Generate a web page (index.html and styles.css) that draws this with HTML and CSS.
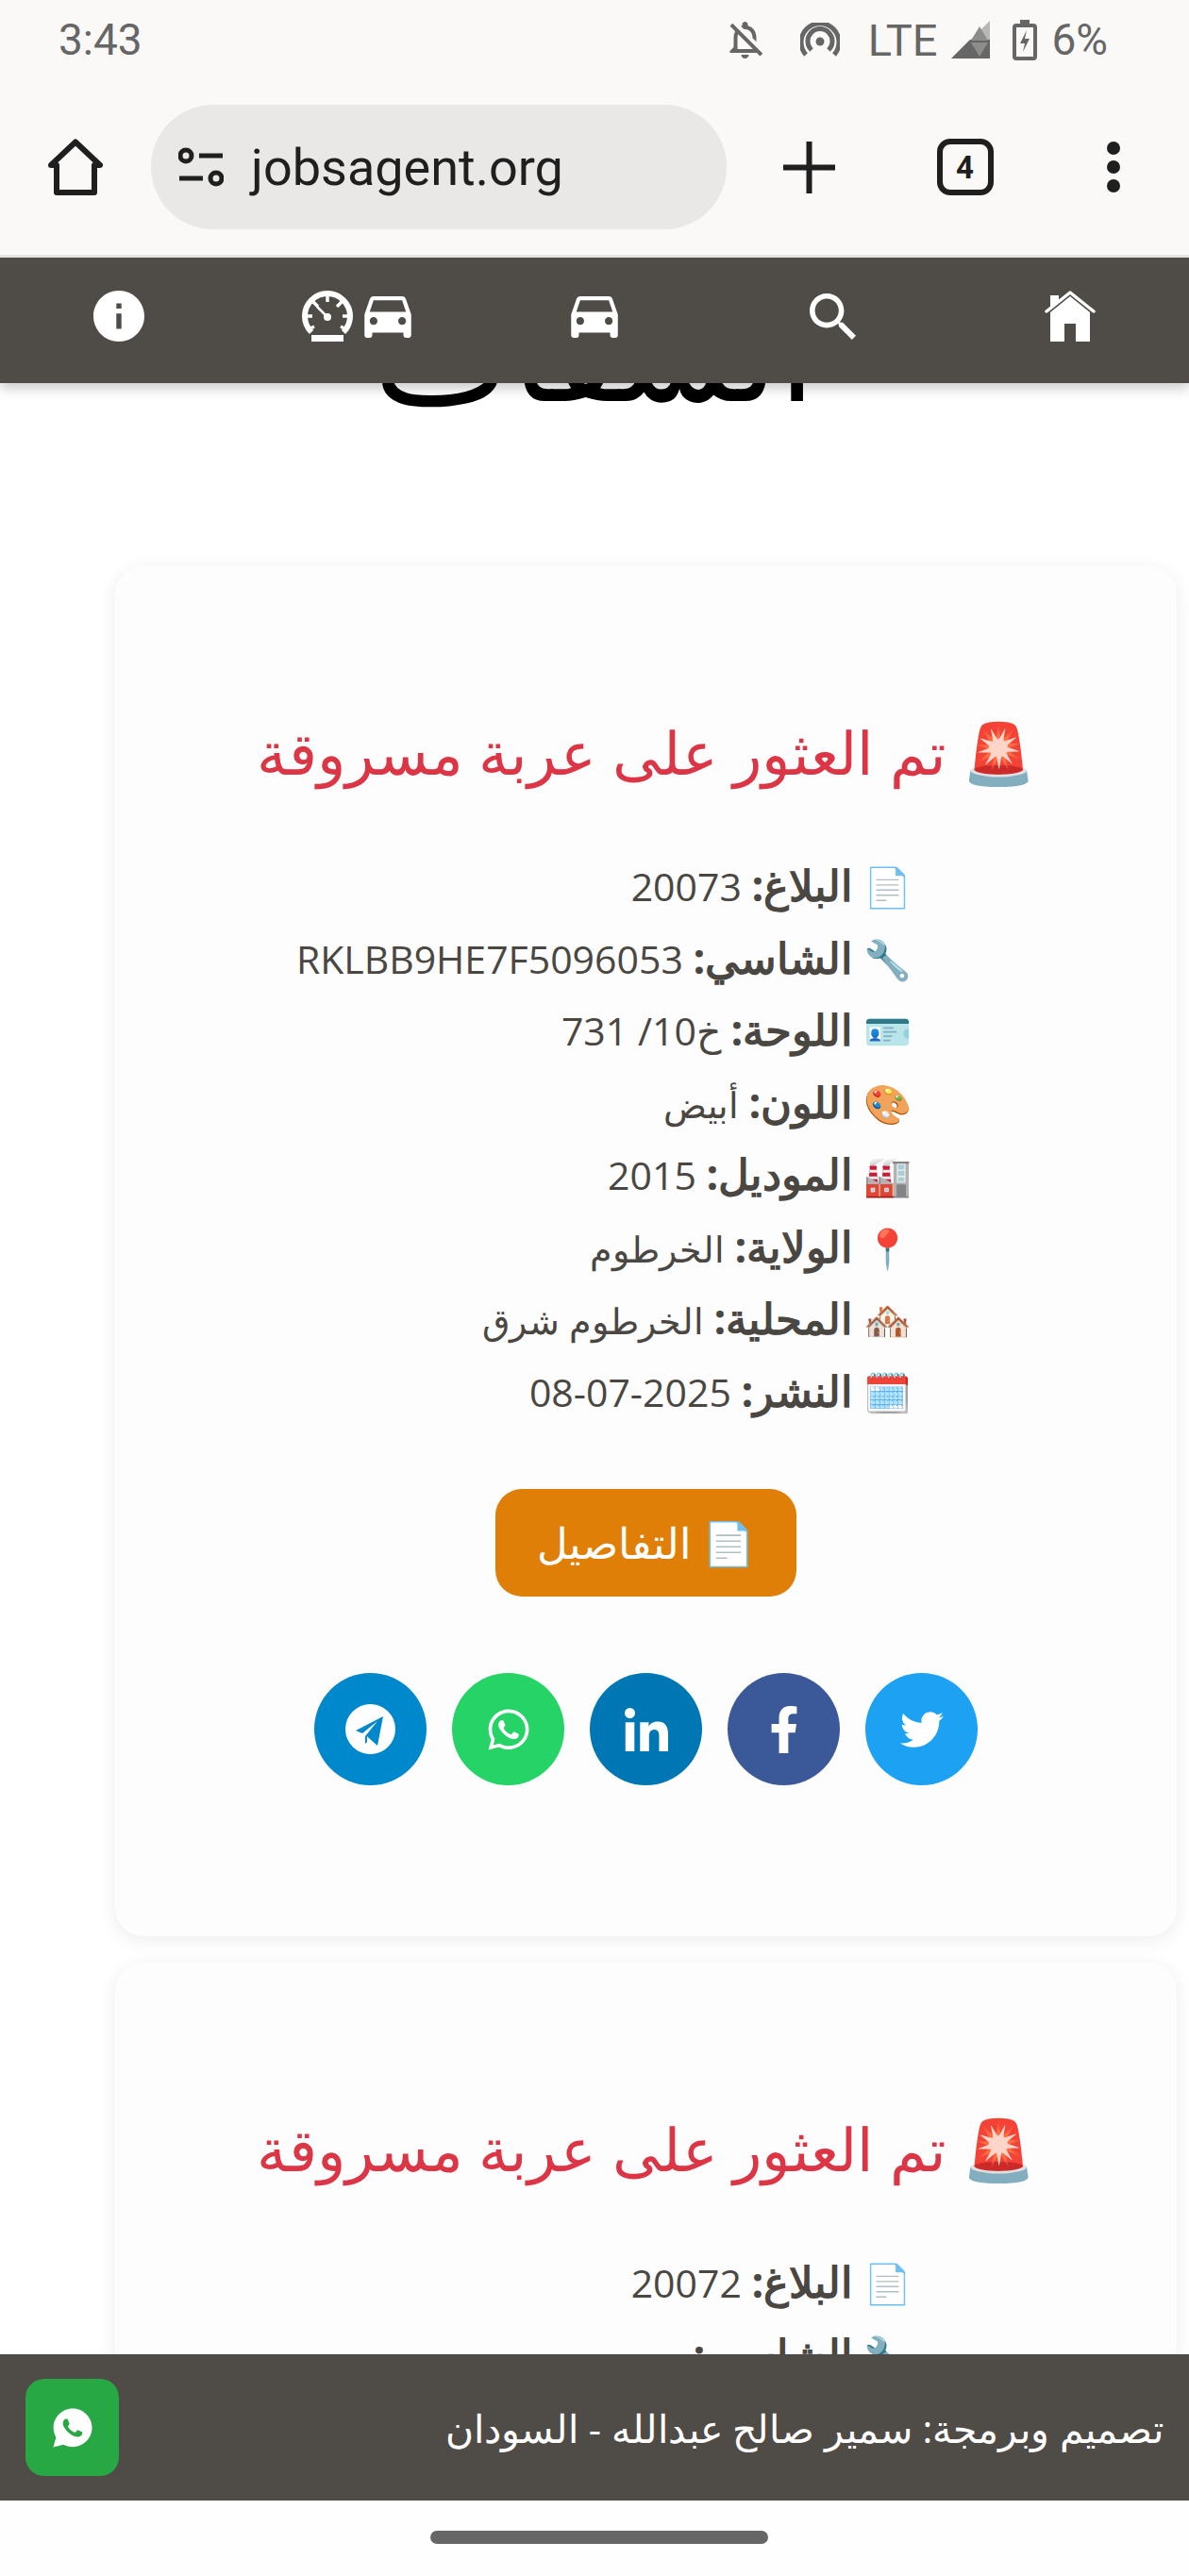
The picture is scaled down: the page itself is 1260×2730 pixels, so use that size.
FILE: index.html
```html
<!DOCTYPE html>
<html lang="ar" dir="rtl">

<head>
    <meta charset="UTF-8">
    <meta name="viewport" content="width=device-width, initial-scale=1.0">
    <title>jobsagent.org</title>
    <link rel="stylesheet" href="styles.css">
</head>

<body>
    <header class="browser" dir="ltr">
        <div class="status-bar">
            <span class="clock">3:43</span>
            <div class="status-icons">
                <svg class="ic-bell" viewBox="3 1.5 19.5 21"><path d="M12 22c1.1 0 2-.9 2-2h-4c0 1.1.9 2 2 2zM12 6.500c2.490 0 4 2.020 4 4.500v.1l2 2V11c0-3.070-1.630-5.640-4.500-6.320V4c0-.83-.67-1.500-1.500-1.500s-1.500.67-1.500 1.500v.68c-.24.06-.47.15-.69.23l1.640 1.640c.18-.02.36-.05.55-.05zM5.410 3.350L4 4.760l2.810 2.810C6.290 8.570 6 9.740 6 11v5l-2 2v1h14.240l1.740 1.740 1.410-1.410L5.410 3.350zM16 17H8v-6c0-.68.12-1.320.34-1.900L16 16.760V17z"/></svg>
                <svg class="ic-hotspot" viewBox="0 0 42 36"><circle cx="21" cy="20" r="4.500"/><path class="arc" d="M12 29a13 13 0 1 1 18 0M6 34a20 20 0 1 1 30 0"/></svg>
                <span class="lte">LTE</span>
                <svg class="ic-signal" viewBox="0 0 41 40"><path class="sig-back" d="M41 0V40H0z"/><path d="M0 40L20 20h21v20z"/><path class="sig-up" d="M30 6l9 15H21z"/><path class="sig-down" d="M21 23h18l-9 15z"/></svg>
                <svg class="ic-battery" viewBox="0 0 26 43"><path d="M8 0h10v4h4a4 4 0 0 1 4 4v31a4 4 0 0 1-4 4H4a4 4 0 0 1-4-4V8a4 4 0 0 1 4-4h4zM4 8v31h18V8z" fill-rule="evenodd"/><path d="M15 11l-7 14h5l-2 9 7-14h-5z"/></svg>
                <span class="percent">6%</span>
            </div>
        </div>
        <div class="toolbar">
            <svg class="ic-home-outline" viewBox="0 0 60 60"><path d="M30 3.500L56 28H50V57H10V28H4z"/></svg>
            <div class="url-pill">
                <svg class="ic-tune" viewBox="0 0 48 42"><circle cx="8" cy="9" r="6"/><path d="M22 9H47M1 33H26"/><circle cx="40" cy="33" r="6"/></svg>
                <span class="url">jobsagent.org</span>
            </div>
            <div class="tool-btn"><svg class="ic-plus" viewBox="0 0 55 55"><path d="M27.500 0V55M0 27.500H55"/></svg></div>
            <div class="tool-btn"><span class="tab-count">4</span></div>
            <div class="tool-btn tool-menu"><i></i><i></i><i></i></div>
        </div>
    </header>

    <div class="page">
        <nav class="site-nav">
            <a href="#">
                <svg class="ic-nav-home" viewBox="0 0 54 54"><path d="M6 5h9v8l-9 7zM27 6L48 23V54H33V35H21V54H6V23z"/><path class="roof" d="M2 22L27 2L52 22"/></svg>
            </a>
            <a href="#">
                <svg class="ic-search" viewBox="3 3 17.490 17.490"><path d="M15.500 14h-.79l-.28-.27C15.410 12.590 16 11.110 16 9.500 16 5.910 13.090 3 9.500 3S3 5.910 3 9.500 5.910 16 9.500 16c1.610 0 3.090-.59 4.230-1.570l.27.28v.79l5 4.990L20.490 19l-4.990-5zm-6 0C7.010 14 5 11.990 5 9.500S7.010 5 9.500 5 14 7.010 14 9.500 11.990 14 9.500 14z"/></svg>
            </a>
            <a href="#">
                <svg class="ic-car" viewBox="3 5 18 16"><path d="M18.920 6.010C18.720 5.420 18.160 5 17.500 5h-11c-.66 0-1.210.42-1.420 1.010L3 12v8c0 .55.45 1 1 1h1c.55 0 1-.45 1-1v-1h12v1c0 .55.45 1 1 1h1c.55 0 1-.45 1-1v-8l-2.080-5.990zM6.500 16c-.83 0-1.500-.67-1.500-1.500S5.670 13 6.500 13s1.500.67 1.500 1.500S7.330 16 6.500 16zm11 0c-.83 0-1.500-.67-1.500-1.500s.67-1.500 1.500-1.500 1.500.67 1.500 1.500-.67 1.500-1.500 1.500zM5 11l1.500-4.500h11L19 11H5z"/></svg>
            </a>
            <a href="#" class="nav-pair">
                <svg class="ic-car" viewBox="3 5 18 16"><path d="M18.920 6.010C18.720 5.420 18.160 5 17.500 5h-11c-.66 0-1.210.42-1.420 1.010L3 12v8c0 .55.45 1 1 1h1c.55 0 1-.45 1-1v-1h12v1c0 .55.45 1 1 1h1c.55 0 1-.45 1-1v-8l-2.080-5.990zM6.500 16c-.83 0-1.500-.67-1.500-1.500S5.670 13 6.500 13s1.500.67 1.500 1.500S7.330 16 6.500 16zm11 0c-.83 0-1.500-.67-1.500-1.500s.67-1.500 1.500-1.500 1.500.67 1.500 1.500-.67 1.500-1.500 1.500zM5 11l1.500-4.500h11L19 11H5z"/></svg>
                <svg class="ic-gauge" viewBox="0 0 54 54">
                    <path class="gauge-ring" d="M10 44A24 24 0 1 1 44 44"/>
                    <path class="gauge-ticks" d="M27 6V12M12 12l5 5M42 12l-5 5M5 27H11M43 27H49M7 41l6-3M47 41l-6-3"/>
                    <path class="gauge-needle" d="M16 17L27 28"/>
                    <circle cx="27" cy="28" r="4"/>
                    <rect x="10" y="47" width="34" height="7"/>
                </svg>
            </a>
            <a href="#">
                <svg class="ic-info" viewBox="2 2 20 20"><path d="M12 2C6.480 2 2 6.480 2 12s4.480 10 10 10 10-4.480 10-10S17.520 2 12 2zm1 15h-2v-6h2v6zm0-8h-2V7h2v2z"/></svg>
            </a>
        </nav>

        <main class="content">
            <h1 class="page-title">الشفاف</h1>

            <article class="card">
                <h2 class="card-title">🚨 تم العثور على عربة مسروقة</h2>
                <ul class="facts">
                    <li>📄 <b>البلاغ:</b> 20073</li>
                    <li>🔧 <b>الشاسي:</b> RKLBB9HE7F5096053</li>
                    <li>🪪 <b>اللوحة:</b> خ10/ 731</li>
                    <li>🎨 <b>اللون:</b> <span class="ar">أبيض</span></li>
                    <li>🏭 <b>الموديل:</b> 2015</li>
                    <li>📍 <b>الولاية:</b> <span class="ar">الخرطوم</span></li>
                    <li>🏘️ <b>المحلية:</b> <span class="ar">الخرطوم شرق</span></li>
                    <li>🗓️ <b>النشر:</b> 2025-07-08</li>
                </ul>
                <a href="#" class="details-btn">📄 التفاصيل</a>
                <div class="share">
                    <a href="#" class="twitter"><svg viewBox="0 0 512 512"><path d="M459.370 151.716c.325 4.548.325 9.097.325 13.645 0 138.720-105.583 298.558-298.558 298.558-59.452 0-114.680-17.219-161.137-47.106 8.447.974 16.568 1.299 25.340 1.299 49.055 0 94.213-16.568 130.274-44.832-46.132-.975-84.792-31.188-98.112-72.772 6.498.974 12.995 1.624 19.818 1.624 9.421 0 18.843-1.300 27.614-3.573-48.081-9.747-84.143-51.980-84.143-102.985v-1.299c13.969 7.797 30.214 12.670 47.431 13.319-28.264-18.843-46.781-51.005-46.781-87.391 0-19.492 5.197-37.360 14.294-52.954 51.655 63.675 129.300 105.258 216.365 109.807-1.624-7.797-2.599-15.918-2.599-24.040 0-57.828 46.782-104.934 104.934-104.934 30.213 0 57.502 12.670 76.670 33.137 23.715-4.548 46.456-13.320 66.599-25.340-7.798 24.366-24.366 44.833-46.132 57.827 21.117-2.273 41.584-8.122 60.426-16.243-14.292 20.791-32.161 39.308-52.628 54.253z"/></svg></a>
                    <a href="#" class="facebook"><svg class="ic-fb" viewBox="0 0 320 512"><path d="M279.140 288l14.220-92.660h-88.910v-60.130c0-25.350 12.420-50.060 52.240-50.060h40.420V6.260S260.430 0 225.360 0c-73.220 0-121.080 44.380-121.080 124.720v70.620H22.890V288h81.390v224h100.170V288z"/></svg></a>
                    <a href="#" class="linkedin"><svg viewBox="0 0 448 448"><path d="M100.280 448H7.400V148.900h92.880zM53.790 108.100C24.090 108.100 0 83.500 0 53.800a53.790 53.790 0 0 1 107.580 0c0 29.700-24.100 54.300-53.790 54.300zM447.900 448h-92.680V302.400c0-34.700-.7-79.200-48.290-79.200-48.290 0-55.690 37.700-55.690 76.700V448h-92.780V148.900h89.080v40.800h1.300c12.400-23.500 42.690-48.300 87.880-48.300 94 0 111.280 61.900 111.280 142.300V448z"/></svg></a>
                    <a href="#" class="whatsapp"><svg viewBox="0 16 448 480"><path d="M380.900 97.100C339 55.100 283.200 32 223.900 32c-122.400 0-222 99.600-222 222 0 39.100 10.200 77.300 29.600 111L0 480l117.700-30.900c32.400 17.700 68.900 27 106.100 27h.1c122.300 0 224.100-99.600 224.100-222 0-59.300-25.200-115-67.100-157zm-157 341.600c-33.200 0-65.700-8.900-94-25.700l-6.700-4-69.800 18.300L72 359.200l-4.400-7c-18.500-29.400-28.200-63.300-28.200-98.200 0-101.700 82.800-184.500 184.600-184.500 49.300 0 95.600 19.200 130.400 54.100 34.800 34.900 56.200 81.200 56.100 130.500 0 101.800-84.900 184.600-186.600 184.600zm101.200-138.200c-5.500-2.800-32.800-16.200-37.900-18-5.100-1.900-8.800-2.800-12.500 2.800-3.700 5.600-14.300 18-17.600 21.800-3.200 3.700-6.500 4.200-12 1.400-32.600-16.300-54-29.100-75.500-66-5.700-9.800 5.700-9.100 16.300-30.300 1.800-3.700.9-6.900-.5-9.700-1.400-2.800-12.500-30.100-17.100-41.200-4.500-10.800-9.100-9.300-12.500-9.500-3.200-.2-6.900-.2-10.600-.2-3.700 0-9.700 1.400-14.800 6.900-5.100 5.600-19.400 19-19.400 46.300 0 27.300 19.900 53.700 22.600 57.400 2.800 3.700 39.100 59.700 94.800 83.800 35.200 15.200 49 16.500 66.600 13.900 10.700-1.600 32.800-13.400 37.400-26.400 4.600-13 4.600-24.100 3.200-26.400-1.300-2.500-5-3.900-10.500-6.600z"/></svg></a>
                    <a href="#" class="telegram"><svg class="ic-tg" viewBox="0 0 53 53"><circle class="tg-disc" cx="26.500" cy="26.500" r="26.500"/><path class="tg-plane" d="M40 13L11 28l7 3 16-13-13 16v8l5-5 8 7zM23 34l3 3-3 3z"/></svg></a>
                </div>
            </article>

            <article class="card">
                <h2 class="card-title">🚨 تم العثور على عربة مسروقة</h2>
                <ul class="facts">
                    <li>📄 <b>البلاغ:</b> 20072</li>
                    <li>🔧 <b>الشاسي:</b></li>
                </ul>
            </article>
        </main>
    </div>

    <footer class="site-footer">
        <span class="credit">تصميم وبرمجة: سمير صالح عبدالله - السودان</span>
        <a href="#" class="contact-btn">
            <svg viewBox="0 16 448 480"><path class="wa-bubble" d="M223.900 32C101.500 32 1.900 131.600 1.900 254c0 39.100 10.200 77.300 29.600 111L0 480l117.700-30.900c32.400 17.700 68.900 27 106.100 27h.1c122.300 0 224.100-99.600 224.100-222S346.300 32 223.900 32z"/><path class="wa-phone" d="M325.100 300.500c-5.500-2.800-32.800-16.200-37.900-18-5.100-1.900-8.800-2.800-12.500 2.800-3.700 5.600-14.300 18-17.600 21.800-3.200 3.700-6.500 4.200-12 1.400-32.600-16.300-54-29.100-75.500-66-5.700-9.800 5.700-9.100 16.300-30.300 1.800-3.700.9-6.900-.5-9.700-1.400-2.800-12.500-30.100-17.100-41.200-4.500-10.800-9.100-9.300-12.500-9.500-3.200-.2-6.900-.2-10.600-.2-3.700 0-9.700 1.400-14.800 6.900-5.100 5.600-19.400 19-19.400 46.300 0 27.300 19.900 53.700 22.600 57.400 2.800 3.700 39.100 59.700 94.800 83.800 35.200 15.200 49 16.500 66.600 13.900 10.700-1.600 32.800-13.400 37.400-26.400 4.600-13 4.600-24.100 3.200-26.400-1.300-2.500-5-3.900-10.500-6.600z"/></svg>
        </a>
    </footer>

    <div class="gesture-bar"><span></span></div>
</body>

</html>
```
FILE: styles.css
```css
* {
    box-sizing: border-box;
}

html,
body {
    height: 100%;
}

body {
    margin: 0;
    display: flex;
    flex-direction: column;
    background-color: #fefefe;
    font-family: "Open Sans", "Noto Sans", sans-serif;
    overflow: hidden;
}

svg {
    display: block;
    fill: currentColor;
}

/* phone + browser chrome */
.browser {
    flex: none;
    height: 273px;
    background-color: #faf9f7;
    border-bottom: 3px solid #e5e4e2;
    font-family: Roboto, sans-serif;
}

.status-bar {
    height: 84px;
    padding: 0 86px 0 62px;
    display: flex;
    justify-content: space-between;
    align-items: center;
    color: #666;
}

.clock {
    font-size: 46px;
}

.status-icons {
    display: flex;
    align-items: center;
}

.ic-bell {
    width: 40px;
    height: 42px;
}

.ic-hotspot {
    width: 42px;
    height: 36px;
    margin-left: 37px;
}

.ic-hotspot .arc {
    fill: none;
    stroke: currentColor;
    stroke-width: 5;
}

.lte {
    font-size: 47px;
    line-height: 1;
    margin-left: 30px;
}

.ic-signal {
    width: 41px;
    height: 40px;
    margin-left: 15px;
}

.sig-back {
    opacity: 0.45;
}

.sig-up,
.sig-down {
    fill: #8d8d8d;
}

.ic-battery {
    width: 26px;
    height: 43px;
    margin-left: 24px;
}

.percent {
    font-size: 46px;
    line-height: 1;
    margin-left: 15px;
}

.toolbar {
    height: 186px;
    padding-left: 50px;
    display: flex;
    align-items: center;
    color: #1f1f1f;
}

.ic-home-outline {
    width: 60px;
    height: 60px;
    flex: none;
}

.ic-home-outline path {
    fill: none;
    stroke: currentColor;
    stroke-width: 6;
    stroke-linejoin: round;
}

.url-pill {
    width: 610px;
    height: 132px;
    margin: 0 5px 0 50px;
    padding-left: 29px;
    border-radius: 66px;
    background-color: #e9e8e6;
    display: flex;
    align-items: center;
    flex: none;
}

.ic-tune {
    width: 48px;
    height: 42px;
}

.ic-tune circle,
.ic-tune path {
    fill: none;
    stroke: currentColor;
    stroke-width: 5;
}

.url {
    font-size: 54px;
    margin-left: 29px;
}

.tool-btn {
    width: 165px;
    display: flex;
    justify-content: center;
    align-items: center;
}

.ic-plus {
    width: 55px;
    height: 55px;
}

.ic-plus path {
    stroke: currentColor;
    stroke-width: 6;
    stroke-linecap: round;
}

.tab-count {
    width: 60px;
    height: 60px;
    border: 6px solid currentColor;
    border-radius: 14px;
    display: flex;
    justify-content: center;
    align-items: center;
    font-size: 33px;
    font-weight: 700;
}

.tool-menu {
    width: 150px;
    flex-direction: column;
    gap: 6px;
}

.tool-menu i {
    width: 14px;
    height: 14px;
    border-radius: 50%;
    background-color: currentColor;
}

/* site */
.page {
    flex: 1;
    min-height: 0;
    overflow: hidden;
    display: flex;
    flex-direction: column;
    background-color: #fff;
}

.site-nav {
    flex: none;
    position: relative;
    z-index: 2;
    height: 133px;
    background-color: #4f4c47;
    box-shadow: 0 6px 12px rgba(0, 0, 0, 0.2);
    display: flex;
    color: #fff;
}

.site-nav a {
    flex: 1;
    padding-top: 35px;
    display: flex;
    justify-content: center;
    align-items: flex-start;
    color: inherit;
}

.nav-pair {
    gap: 12px;
}

.ic-nav-home {
    width: 54px;
    height: 54px;
}

.ic-nav-home .roof {
    fill: none;
    stroke: currentColor;
    stroke-width: 3.500;
    stroke-linecap: round;
    stroke-linejoin: round;
}

.ic-search {
    width: 49px;
    height: 49px;
    margin-top: 3px;
}

.ic-car {
    width: 50px;
    height: 44px;
    margin-top: 6px;
}

.ic-gauge {
    width: 54px;
    height: 54px;
}

.gauge-ring,
.gauge-ticks,
.gauge-needle {
    fill: none;
    stroke: currentColor;
}

.gauge-ring {
    stroke-width: 6;
}

.gauge-ticks {
    stroke-width: 3.500;
}

.gauge-needle {
    stroke-width: 2.500;
}

.ic-info {
    width: 54px;
    height: 54px;
}

.page-title {
    margin: -86px 0 180px;
    height: 100px;
    font-size: 141px;
    line-height: 100px;
    font-weight: 400;
    text-align: center;
    color: #000;
}

.card {
    height: 1452px;
    margin: 0 13px 28px 0;
    margin-left: 122px;
    padding-top: 152px;
    background-color: #fdfdfd;
    border-radius: 30px;
    box-shadow: 0 4px 20px rgba(0, 0, 0, 0.08);
    text-align: center;
}

.card-title {
    margin: 0 0 58px;
    height: 90px;
    font-size: 63px;
    line-height: 90px;
    font-weight: 400;
    color: #dc3545;
}

.facts {
    list-style: none;
    margin: 0 281px 0 0;
    padding: 0;
    font-size: 41px;
    line-height: 76.500px;
    color: #4a4742;
    text-align: right;
}

.facts li {
    height: 76.500px;
}

.facts b {
    font-size: 45px;
}

.facts .ar {
    font-size: 38px;
}

.details-btn {
    display: inline-block;
    margin-top: 66px;
    height: 114px;
    padding: 0 44px;
    border-radius: 28px;
    background-color: #df7f07;
    color: #fff;
    font-size: 45px;
    line-height: 114px;
    text-decoration: none;
}

.share {
    margin-top: 81px;
    display: flex;
    justify-content: center;
    gap: 27px;
}

.share a {
    width: 119px;
    height: 119px;
    border-radius: 50%;
    display: flex;
    justify-content: center;
    align-items: center;
    color: #fff;
}

.share svg {
    width: 46px;
    height: 46px;
}

.share .ic-fb {
    width: 32px;
    height: 50px;
}

.share .ic-tg {
    width: 53px;
    height: 53px;
}

.tg-plane {
    fill: #0088cc;
}

.twitter {
    background-color: #1da1f2;
}

.facebook {
    background-color: #3b5998;
}

.linkedin {
    background-color: #0077b5;
}

.whatsapp {
    background-color: #25d366;
}

.telegram {
    background-color: #0088cc;
}

.site-footer {
    flex: none;
    height: 155px;
    padding: 0 27px;
    background-color: #4f4c47;
    display: flex;
    justify-content: space-between;
    align-items: center;
    color: #fff;
}

.credit {
    font-size: 41px;
}

.contact-btn {
    width: 99px;
    height: 103px;
    border-radius: 20px;
    background-color: #28a745;
    display: flex;
    justify-content: center;
    align-items: center;
}

.contact-btn svg {
    width: 42px;
    height: 44px;
}

.wa-bubble {
    fill: #fff;
}

.wa-phone {
    fill: #28a745;
}

.gesture-bar {
    flex: none;
    height: 80px;
    padding: 32px 0 0 10px;
    display: flex;
    justify-content: center;
}

.gesture-bar span {
    width: 358px;
    height: 14px;
    border-radius: 7px;
    background-color: #666;
}
```
